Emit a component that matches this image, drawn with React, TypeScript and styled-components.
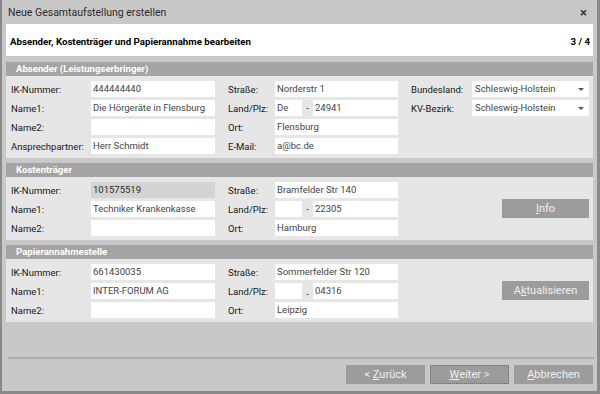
import styled, { createGlobalStyle } from 'styled-components';

const Global = createGlobalStyle`
  html, body { margin: 0; padding: 0; background: #c8c8c8; }
  body { font-family: Roboto, "Noto Sans", sans-serif; font-size: 9.5px; color: #161616; }
  * { box-sizing: border-box; }
`;

const Window = styled.div`
  width: 600px;
  height: 394px;
  display: flex;
  flex-direction: column;
  background: #c8c8c8;
  border-left: 2px solid #8a8a8a;
  border-right: 3px solid #8a8a8a;
  border-bottom: 3px solid #8a8a8a;
  padding: 0 4px;
`;

const TitleBar = styled.div`
  height: 24px;
  display: flex;
  align-items: center;
  justify-content: space-between;
  padding: 0 6px 0 2px;
  font-size: 10.5px;
  color: #2b2b2b;
`;

const Close = styled.span`
  font-size: 13px;
  font-weight: 700;
  color: #333;
  line-height: 1;
`;

const Header = styled.div`
  height: 32px;
  background: #fff;
  display: flex;
  align-items: center;
  justify-content: space-between;
  padding: 2px 3px 0 4px;
  font-weight: 700;
  font-size: 9.7px;
  color: #000;
  margin-bottom: 6px;
`;

const Section = styled.section`
  background: #e6e6e6;
  margin-bottom: 5px;
`;

const SectionBar = styled.div`
  height: 14px;
  background: #a4a4a4;
  color: #fff;
  font-weight: 700;
  font-size: 9.6px;
  line-height: 14px;
  padding-left: 10px;
`;

const Grid = styled.div`
  display: grid;
  grid-template-columns: 204px 170px 178px;
  grid-auto-rows: 16px;
  column-gap: 13px;
  row-gap: 3px;
  padding: 5px 4px 4px 5px;
`;

const Field = styled.div<{ $labelW: number }>`
  display: grid;
  grid-template-columns: ${({ $labelW }) => $labelW}px 1fr;
  align-items: center;
`;

const Label = styled.span`
  white-space: nowrap;
  color: #161616;
`;

const Box = styled.div<{ $disabled?: boolean; $w?: number }>`
  height: 16px;
  line-height: 16px;
  background: ${({ $disabled }) => ($disabled ? '#d3d3d3' : '#fff')};
  color: ${({ $disabled }) => ($disabled ? '#2a2a2a' : '#444')};
  padding: 0 2px;
  white-space: nowrap;
  overflow: hidden;
  ${({ $w }) => ($w ? `width: ${$w}px; flex-shrink: 0;` : 'flex: 1;')}
`;

const PlzRow = styled.div`
  display: flex;
  align-items: center;
  height: 16px;
`;

const Dash = styled.span<{ $low?: boolean }>`
  width: 11px;
  text-align: center;
  color: #333;
  align-self: ${({ $low }) => ($low ? 'flex-end' : 'center')};
  line-height: ${({ $low }) => ($low ? '10px' : '16px')};
`;

const Select = styled.div`
  height: 16px;
  line-height: 16px;
  background: #fff;
  color: #444;
  padding: 0 3px;
  display: flex;
  justify-content: space-between;
  align-items: center;
`;

const Caret = styled.span`
  width: 0;
  height: 0;
  border-left: 3px solid transparent;
  border-right: 3px solid transparent;
  border-top: 3px solid #555;
  margin-right: 2px;
`;

const SideButton = styled.div`
  grid-column: 3;
  justify-self: end;
  align-self: center;
  width: 87px;
  height: 19px;
  margin: -2px 0 -1px;
  background: #9c9c9c;
  color: #f0f0f0;
  font-size: 11px;
  display: flex;
  align-items: center;
  justify-content: center;
`;

const Spacer = styled.div`
  flex: 1;
`;

const Separator = styled.div`
  height: 2px;
  background: #acacac;
  margin: 0 -1px 6px 2px;
`;

const Footer = styled.div`
  display: flex;
  justify-content: flex-end;
  gap: 5px;
  margin-bottom: 7px;
`;

const FooterButton = styled.div<{ $focus?: boolean }>`
  width: 79px;
  height: 19px;
  background: #9c9c9c;
  color: #f0f0f0;
  font-size: 11px;
  display: flex;
  align-items: center;
  justify-content: center;
  border: 1px ${({ $focus }) => ($focus ? 'dotted #6a6a6a' : 'solid #9c9c9c')};
`;

const U = styled.span`
  text-decoration: underline;
`;

type Plz = { land: string; plz: string; low?: boolean };

function Text({ label, value, w, disabled }: { label: string; value: string; w: number; disabled?: boolean }) {
  return (
    <Field $labelW={w}>
      <Label>{label}</Label>
      <Box $disabled={disabled}>{value}</Box>
    </Field>
  );
}

function PlzField({ land, plz, low }: Plz) {
  return (
    <Field $labelW={47}>
      <Label>Land/Plz:</Label>
      <PlzRow>
        <Box $w={27}>{land}</Box>
        <Dash $low={low}>-</Dash>
        <Box>{plz}</Box>
      </PlzRow>
    </Field>
  );
}

function Drop({ label, value }: { label: string; value: string }) {
  return (
    <Field $labelW={61}>
      <Label>{label}</Label>
      <Select>
        {value}
        <Caret />
      </Select>
    </Field>
  );
}

const Empty = styled.div``;

export default function App() {
  return (
    <>
      <Global />
      <Window>
        <TitleBar>
          <span>Neue Gesamtaufstellung erstellen</span>
          <Close>×</Close>
        </TitleBar>
        <Header>
          <span>Absender, Kostenträger und Papierannahme bearbeiten</span>
          <span>3 / 4</span>
        </Header>

        <Section>
          <SectionBar>Absender (Leistungserbringer)</SectionBar>
          <Grid>
            <Text label="IK-Nummer:" value="444444440" w={80} />
            <Text label="Straße:" value="Norderstr 1" w={47} />
            <Drop label="Bundesland:" value="Schleswig-Holstein" />
            <Text label="Name1:" value="Die Hörgeräte in Flensburg" w={80} />
            <PlzField land="De" plz="24941" />
            <Drop label="KV-Bezirk:" value="Schleswig-Holstein" />
            <Text label="Name2:" value="" w={80} />
            <Text label="Ort:" value="Flensburg" w={47} />
            <Empty />
            <Text label="Ansprechpartner:" value="Herr Schmidt" w={80} />
            <Text label="E-Mail:" value="a@bc.de" w={47} />
          </Grid>
        </Section>

        <Section>
          <SectionBar>Kostenträger</SectionBar>
          <Grid>
            <Text label="IK-Nummer:" value="101575519" w={80} disabled />
            <Text label="Straße:" value="Bramfelder Str 140" w={47} />
            <Empty />
            <Text label="Name1:" value="Techniker Krankenkasse" w={80} />
            <PlzField land="" plz="22305" />
            <SideButton>
              <U>I</U>nfo
            </SideButton>
            <Text label="Name2:" value="" w={80} />
            <Text label="Ort:" value="Hamburg" w={47} />
          </Grid>
        </Section>

        <Section>
          <SectionBar>Papierannahmestelle</SectionBar>
          <Grid>
            <Text label="IK-Nummer:" value="661430035" w={80} />
            <Text label="Straße:" value="Sommerfelder Str 120" w={47} />
            <Empty />
            <Text label="Name1:" value="INTER-FORUM AG" w={80} />
            <PlzField land="" plz="04316" low />
            <SideButton>
              A<U>k</U>tualisieren
            </SideButton>
            <Text label="Name2:" value="" w={80} />
            <Text label="Ort:" value="Leipzig" w={47} />
          </Grid>
        </Section>

        <Spacer />
        <Separator />
        <Footer>
          <FooterButton>
            &lt;&nbsp;<U>Z</U>urück
          </FooterButton>
          <FooterButton $focus>
            <U>W</U>eiter&nbsp;&gt;
          </FooterButton>
          <FooterButton>
            <U>A</U>bbrechen
          </FooterButton>
        </Footer>
      </Window>
    </>
  );
}
